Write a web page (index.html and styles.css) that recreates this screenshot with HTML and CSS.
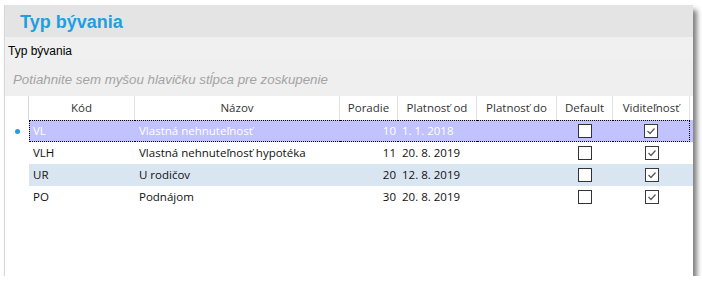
FILE: index.html
```html
<!DOCTYPE html>
<html>
<head>
  <meta charset="UTF-8">
  <title>Typ bývania</title>
  <link rel="stylesheet" href="styles.css">
</head>
<body>
  <div class="window">
    <div class="title-bar">Typ bývania</div>
    <div class="label-bar">Typ bývania</div>
    <div class="group-panel">Potiahnite sem myšou hlavičku stĺpca pre zoskupenie</div>

    <div class="grid">
      <div class="row head">
        <div class="cell ind"></div>
        <div class="cell">Kód</div>
        <div class="cell">Názov</div>
        <div class="cell">Poradie</div>
        <div class="cell">Platnosť od</div>
        <div class="cell">Platnosť do</div>
        <div class="cell">Default</div>
        <div class="cell">Viditeľnosť</div>
      </div>

      <div class="row selected">
        <div class="cell ind"><span class="dot"></span></div>
        <div class="cell">VL</div>
        <div class="cell">Vlastná nehnuteľnosť</div>
        <div class="cell num">10</div>
        <div class="cell">1. 1. 2018</div>
        <div class="cell"></div>
        <div class="cell chk"><span class="box"></span></div>
        <div class="cell chk"><span class="box checked"><svg viewBox="0 0 12 12"><path d="M2.5 6 L5 8.5 L9.5 3.5"/></svg></span></div>
      </div>

      <div class="row">
        <div class="cell ind"></div>
        <div class="cell">VLH</div>
        <div class="cell">Vlastná nehnuteľnosť hypotéka</div>
        <div class="cell num">11</div>
        <div class="cell">20. 8. 2019</div>
        <div class="cell"></div>
        <div class="cell chk"><span class="box"></span></div>
        <div class="cell chk"><span class="box checked"><svg viewBox="0 0 12 12"><path d="M2.5 6 L5 8.5 L9.5 3.5"/></svg></span></div>
      </div>

      <div class="row alt">
        <div class="cell ind"></div>
        <div class="cell">UR</div>
        <div class="cell">U rodičov</div>
        <div class="cell num">20</div>
        <div class="cell">12. 8. 2019</div>
        <div class="cell"></div>
        <div class="cell chk"><span class="box"></span></div>
        <div class="cell chk"><span class="box checked"><svg viewBox="0 0 12 12"><path d="M2.5 6 L5 8.5 L9.5 3.5"/></svg></span></div>
      </div>

      <div class="row">
        <div class="cell ind"></div>
        <div class="cell">PO</div>
        <div class="cell">Podnájom</div>
        <div class="cell num">30</div>
        <div class="cell">20. 8. 2019</div>
        <div class="cell"></div>
        <div class="cell chk"><span class="box"></span></div>
        <div class="cell chk"><span class="box checked"><svg viewBox="0 0 12 12"><path d="M2.5 6 L5 8.5 L9.5 3.5"/></svg></span></div>
      </div>
    </div>
  </div>
</body>
</html>
```

FILE: styles.css
```css
body { margin: 0; background: #fff; font-family: "Open Sans", "Noto Sans", sans-serif; }

.window { margin: 5px 0 0 4px; width: 689px; height: 271px; background: #fff; display: flex; flex-direction: column; box-shadow: 4px 5px 5px rgba(0,0,0,0.5); border-left: 1px solid #d8d8d8; box-sizing: border-box; }

.title-bar { height: 32px; background: #e4e4e4; color: #1e9fe0; font: bold 18px "Liberation Sans", Arial, sans-serif; padding-left: 15px; line-height: 34px; }
.label-bar { height: 23px; background: #f0f0f0; font: 12px "Liberation Sans", Arial, sans-serif; padding-left: 3px; line-height: 28px; color: #000; }
.group-panel { height: 36px; background: #efefef; font: italic 13.3px "Liberation Sans", Arial, sans-serif; color: #a3a3a3; padding-left: 8px; line-height: 40px; }

.grid { flex: 1; background: #fff; }

.row { display: grid; grid-template-columns: 24px 106px 205px 58px 79px 80px 56px 77px; height: 22px; font-size: 11.5px; color: #111; }
.cell { line-height: 22px; padding-left: 4px; white-space: nowrap; overflow: hidden; display: flex; align-items: center; }

.row.head { height: 24px; color: #333; }
.row.head .cell { justify-content: center; padding: 0; border-right: 1px solid #e2e2e2; }
.row.head .cell.ind { border-right: 1px solid #d8d8d8; }

.row.selected { background: linear-gradient(to right, #fff 24px, #c2c2ff 24px); color: #fff; }
.row.selected .cell:not(.ind) { border-top: 1px dotted #000; border-bottom: 1px dotted #000; }
.row.selected .cell:nth-child(2) { border-left: 1px dotted #000; padding-left: 3px; }
.row.selected .cell:last-child { border-right: 1px dotted #000; }

.row.alt { background: linear-gradient(to right, #fff 24px, #dae5f2 24px); }

.cell.num { justify-content: flex-end; padding: 0 2px 0 0; }
.cell.chk { justify-content: center; padding: 0; }
.cell.ind { justify-content: center; padding: 0; }

.dot { width: 5px; height: 5px; border-radius: 50%; background: #1e9fe0; }

.box { width: 12px; height: 12px; border: 1px solid #333; background: #fff; display: flex; }
.box.checked { border-color: #3a3a3a; }
.box svg { width: 12px; height: 12px; }
.box path { fill: none; stroke: #5a5a5a; stroke-width: 1.3; }
```
